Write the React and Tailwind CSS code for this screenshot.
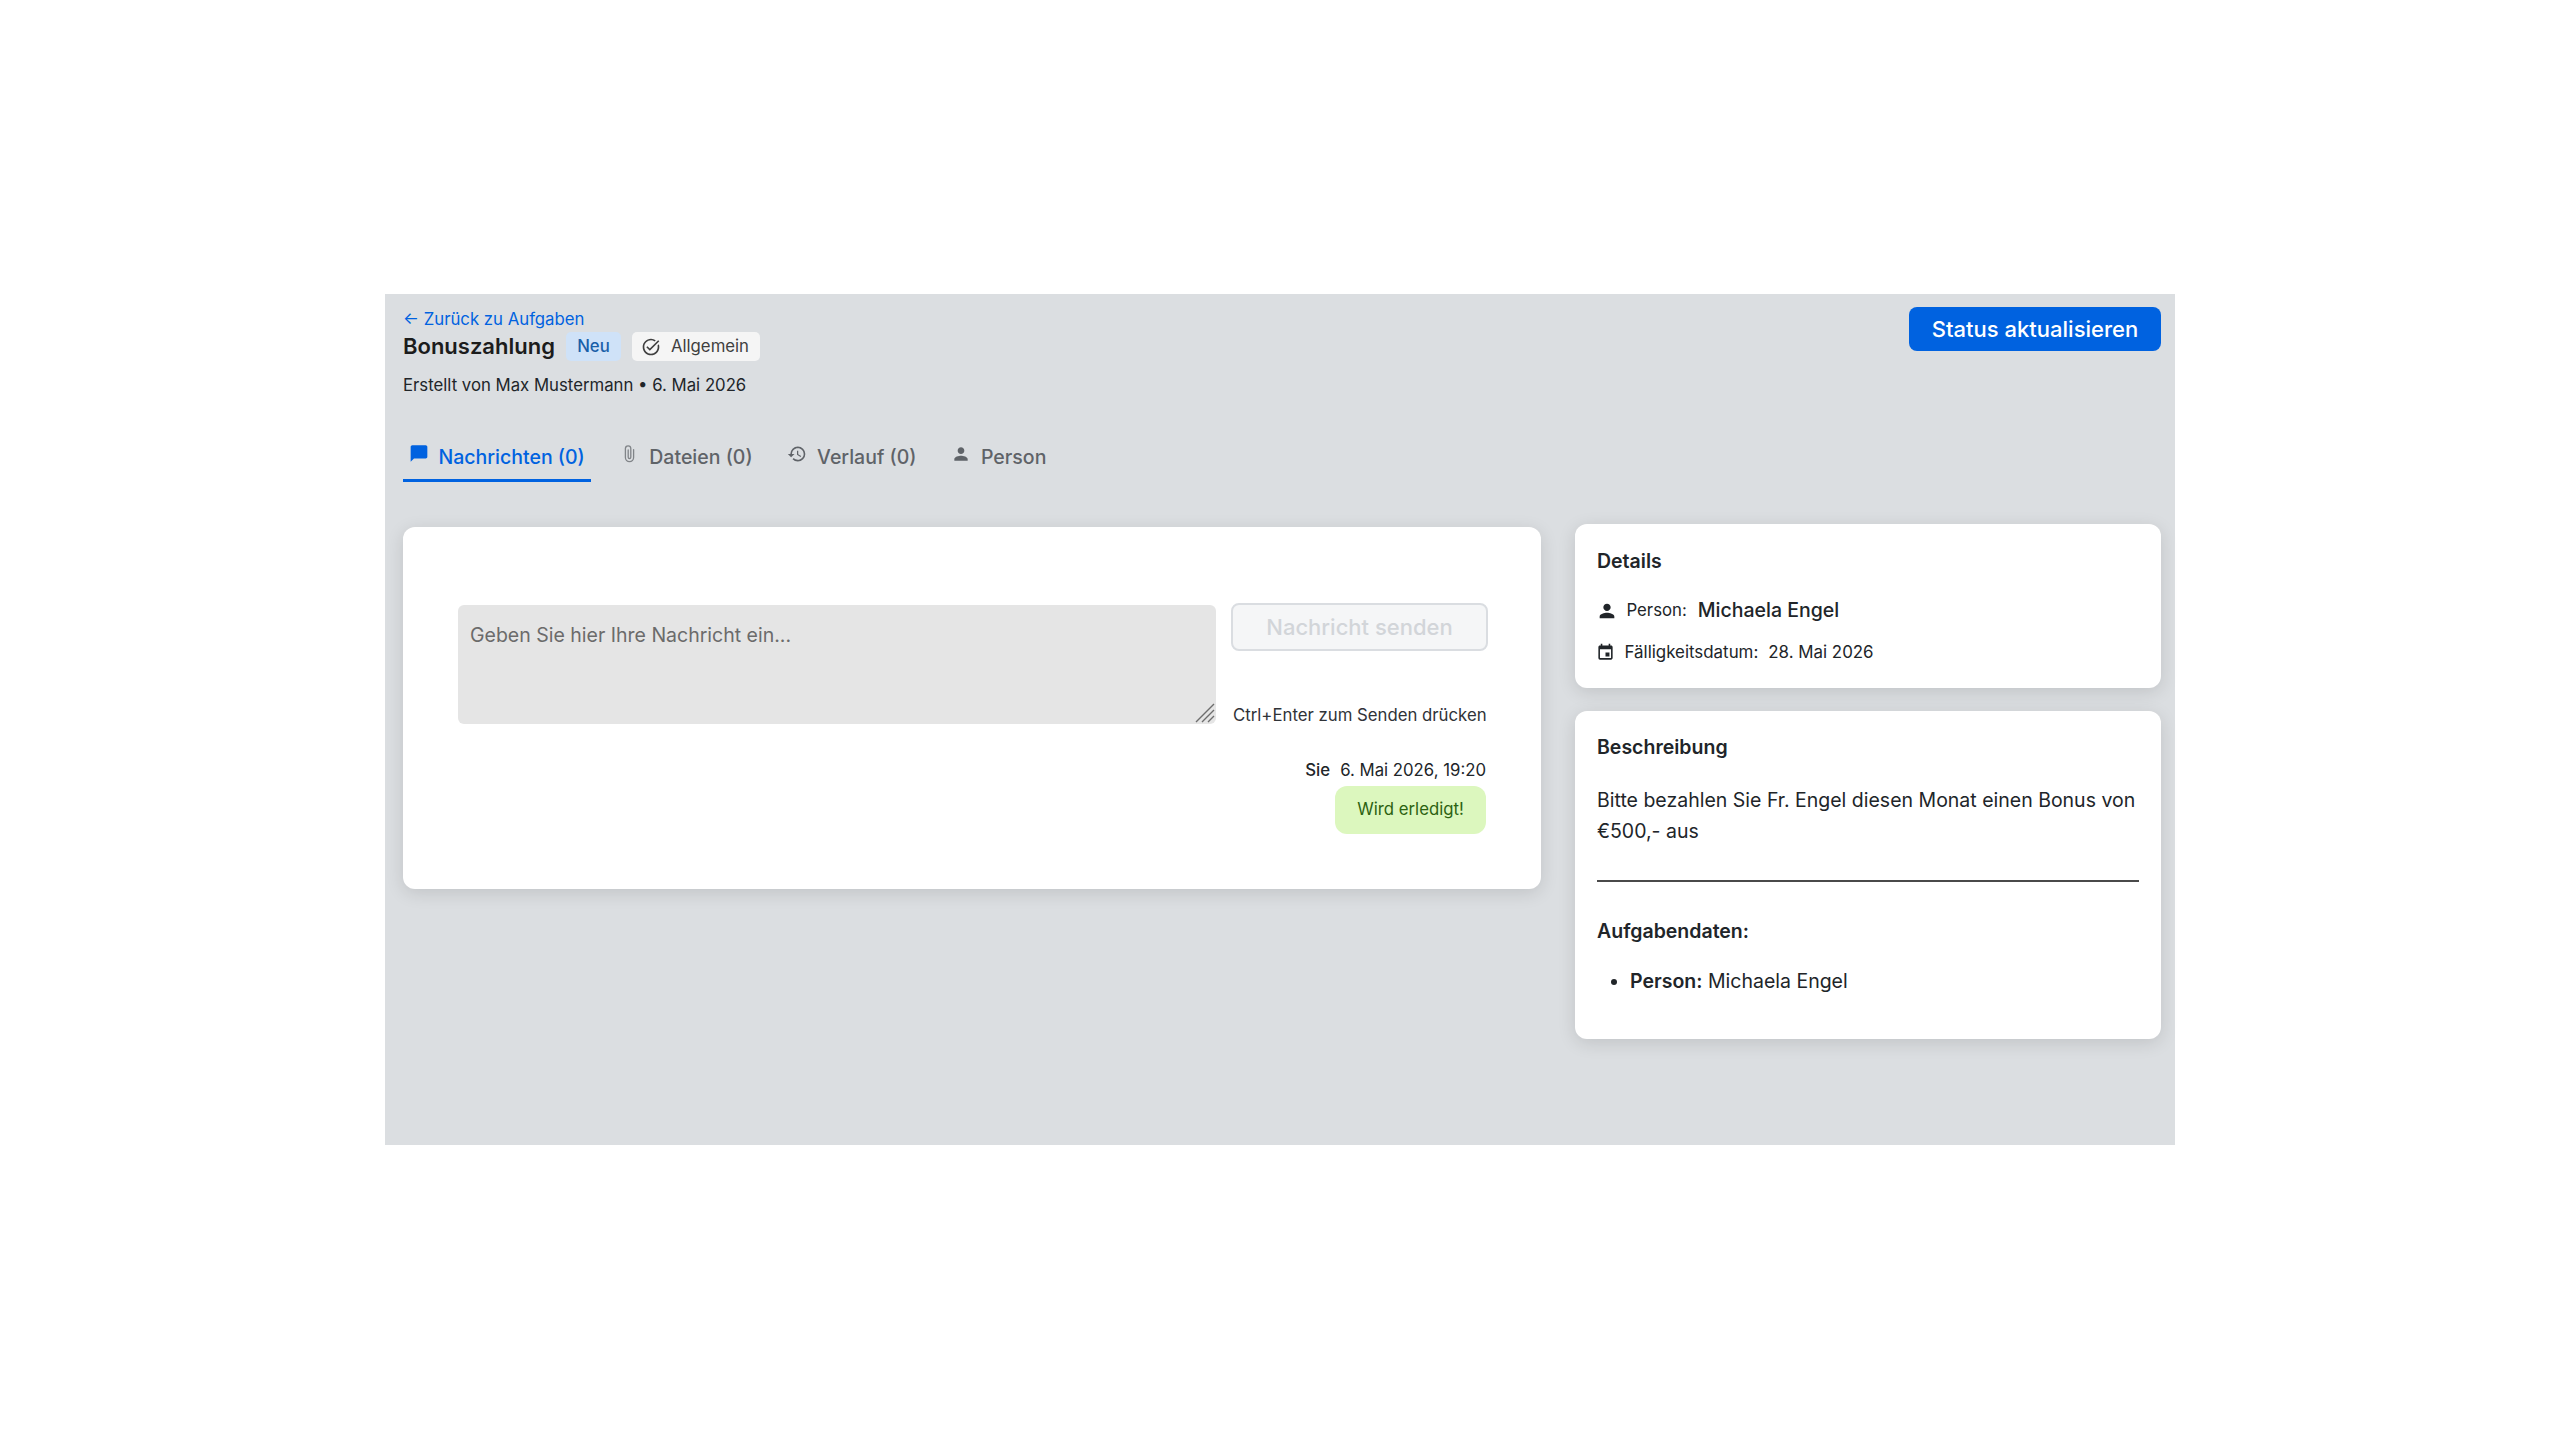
import React from "react";
import { MdChatBubble, MdHistory, MdPerson, MdOutlineTaskAlt, MdEvent } from "react-icons/md";

function Tab({ icon, label, active }) {
  return (
    <div className={active ? "flex h-[47px] items-center pl-[5.5px] pr-[6px] border-b-[3px] border-[#0062e0] text-[#0062e0]" : "flex h-[47px] items-center pl-[5.5px] pr-[6px] border-b-[3px] border-transparent text-[#5f6368]"}>
      <span className="mr-[10px] -mt-[7px] flex w-[20px] justify-center">{icon}</span>
      <span className="text-[19.5px] font-medium leading-[27px]">{label}</span>
    </div>
  );
}

function Card({ className, children }) {
  return <div className={"rounded-[12px] bg-white shadow-[0_4px_18px_rgba(0,0,0,0.12)] " + className}>{children}</div>;
}

function Clip() {
  return (
    <svg width="11" height="18" viewBox="0 0 11 18" fill="none" stroke="#808488" strokeWidth="1.3" strokeLinecap="round">
      <path d="M9.6 4.6v8a4.1 4.1 0 0 1-8.2 0V3.6a2.7 2.7 0 0 1 5.4 0v8.6a1.3 1.3 0 0 1-2.6 0V5" />
    </svg>
  );
}

export default function App() {
  return (
    <div className="min-h-screen bg-white pt-[294px] font-['Inter',sans-serif] text-[#212529]">
      <div className="mx-auto h-[851px] w-[1790px] bg-[#dbdee1] pl-[18px] pr-[14px]">
        <header className="flex justify-between">
          <div className="pt-[15px]">
            <a className="block h-[20px] text-[16.75px] leading-[20px] text-[#0062e0]">← Zurück zu Aufgaben</a>
            <div className="mt-[3px] flex h-[29px] items-center">
              <h1 className="text-[22px] font-semibold leading-[29px] text-[#1c1c1c]">Bonuszahlung</h1>
              <span className="ml-[11px] flex h-[29px] w-[55px] items-center justify-center rounded-[5px] bg-[#cfe2f8] text-[16.75px] font-medium text-[#1a5fa8]">Neu</span>
              <span className="ml-[11px] flex h-[29px] w-[128px] items-center gap-[10px] rounded-[5px] bg-[#f5f5f5] pl-[9px] text-[16.75px] text-[#3f3f3f]">
                <MdOutlineTaskAlt className="text-[20px]" />
                Allgemein
              </span>
            </div>
            <p className="mt-[12px] text-[16.75px] leading-[24px] text-[#212529]">Erstellt von Max Mustermann • 6. Mai 2026</p>
          </div>
          <button className="mt-[13px] h-[44px] w-[252px] rounded-[8px] bg-[#0062e0] text-[22px] font-medium text-white">Status aktualisieren</button>
        </header>

        <nav className="mt-[38px] flex gap-[23px]">
          <Tab active icon={<MdChatBubble className="text-[21px]" />} label="Nachrichten (0)" />
          <Tab icon={<Clip />} label="Dateien (0)" />
          <Tab icon={<MdHistory className="text-[22px]" />} label="Verlauf (0)" />
          <Tab icon={<MdPerson className="text-[22px]" />} label="Person" />
        </nav>

        <div className="mt-[42px] flex items-start gap-[34px]">
          <Card className="mt-[3px] h-[362px] w-[1138px] flex-none px-[55px] pt-[78px]">
            <div className="flex gap-[15px]">
              <div className="relative h-[119px] w-[758px] flex-none rounded-[6px] bg-[#e5e5e5] px-[12px] pt-[17px] text-[19.5px] leading-[27px] text-[#6b6b6b]">
                Geben Sie hier Ihre Nachricht ein...
                <svg className="absolute bottom-[1px] right-[1px]" width="20" height="20" viewBox="0 0 20 20" stroke="#6e6e6e" strokeWidth="1.4">
                  <path d="M1 19 19 1M7 19 19 7M13 19 19 13" />
                </svg>
              </div>
              <div className="-mr-[2px] -mt-[2px] flex-1">
                <button className="h-[48px] w-[257px] rounded-[8px] border-2 border-[#dadde1] bg-[#f5f6f7] text-[22px] font-medium text-[#d2d5d9]">Nachricht senden</button>
                <p className="mt-[52px] pl-[2px] text-[16.75px] leading-[24px] text-[#303338]">Ctrl+Enter zum Senden drücken</p>
              </div>
            </div>
            <div className="mt-[31px] flex flex-col items-end">
              <p className="text-[16.75px] leading-[24px]">
                <span className="font-medium">Sie</span>
                <span className="ml-[10px]">6. Mai 2026, 19:20</span>
              </p>
              <div className="mt-[4px] flex h-[48px] w-[151px] items-center justify-center rounded-[12px] bg-[#dcf7be] text-[16.75px] text-[#2c6212]">Wird erledigt!</div>
            </div>
          </Card>

          <div className="flex flex-1 flex-col gap-[23px]">
            <Card className="h-[164px] px-[22px] pt-[24px]">
              <h2 className="text-[19.5px] font-semibold leading-[27px]">Details</h2>
              <div className="mt-[22px] flex h-[27px] items-center">
                <MdPerson className="-ml-[1.5px] mr-[9px] text-[22px]" />
                <span className="text-[16.75px]">Person:</span>
                <span className="ml-[11px] text-[19.5px] font-medium">Michaela Engel</span>
              </div>
              <div className="mt-[15px] flex h-[27px] items-center">
                <MdEvent className="-ml-[1.5px] mr-[10px] text-[19px]" />
                <span className="text-[16.9px]">Fälligkeitsdatum:</span>
                <span className="ml-[10px] text-[16.9px]">28. Mai 2026</span>
              </div>
            </Card>
            <Card className="h-[328px] px-[22px] pt-[23px]">
              <h2 className="text-[19.5px] font-semibold leading-[27px]">Beschreibung</h2>
              <p className="mt-[24px] text-[19.5px] leading-[31px]">Bitte bezahlen Sie Fr. Engel diesen Monat einen Bonus von €500,- aus</p>
              <hr className="mt-[33px] border-t-2 border-[#4a4a4a]" />
              <h3 className="mt-[36px] text-[19.5px] font-semibold leading-[27px]">Aufgabendaten:</h3>
              <ul className="mt-[23px] list-disc pl-[33px] text-[19.5px] leading-[27px]">
                <li><strong className="font-semibold">Person:</strong> Michaela Engel</li>
              </ul>
            </Card>
          </div>
        </div>
      </div>
    </div>
  );
}
